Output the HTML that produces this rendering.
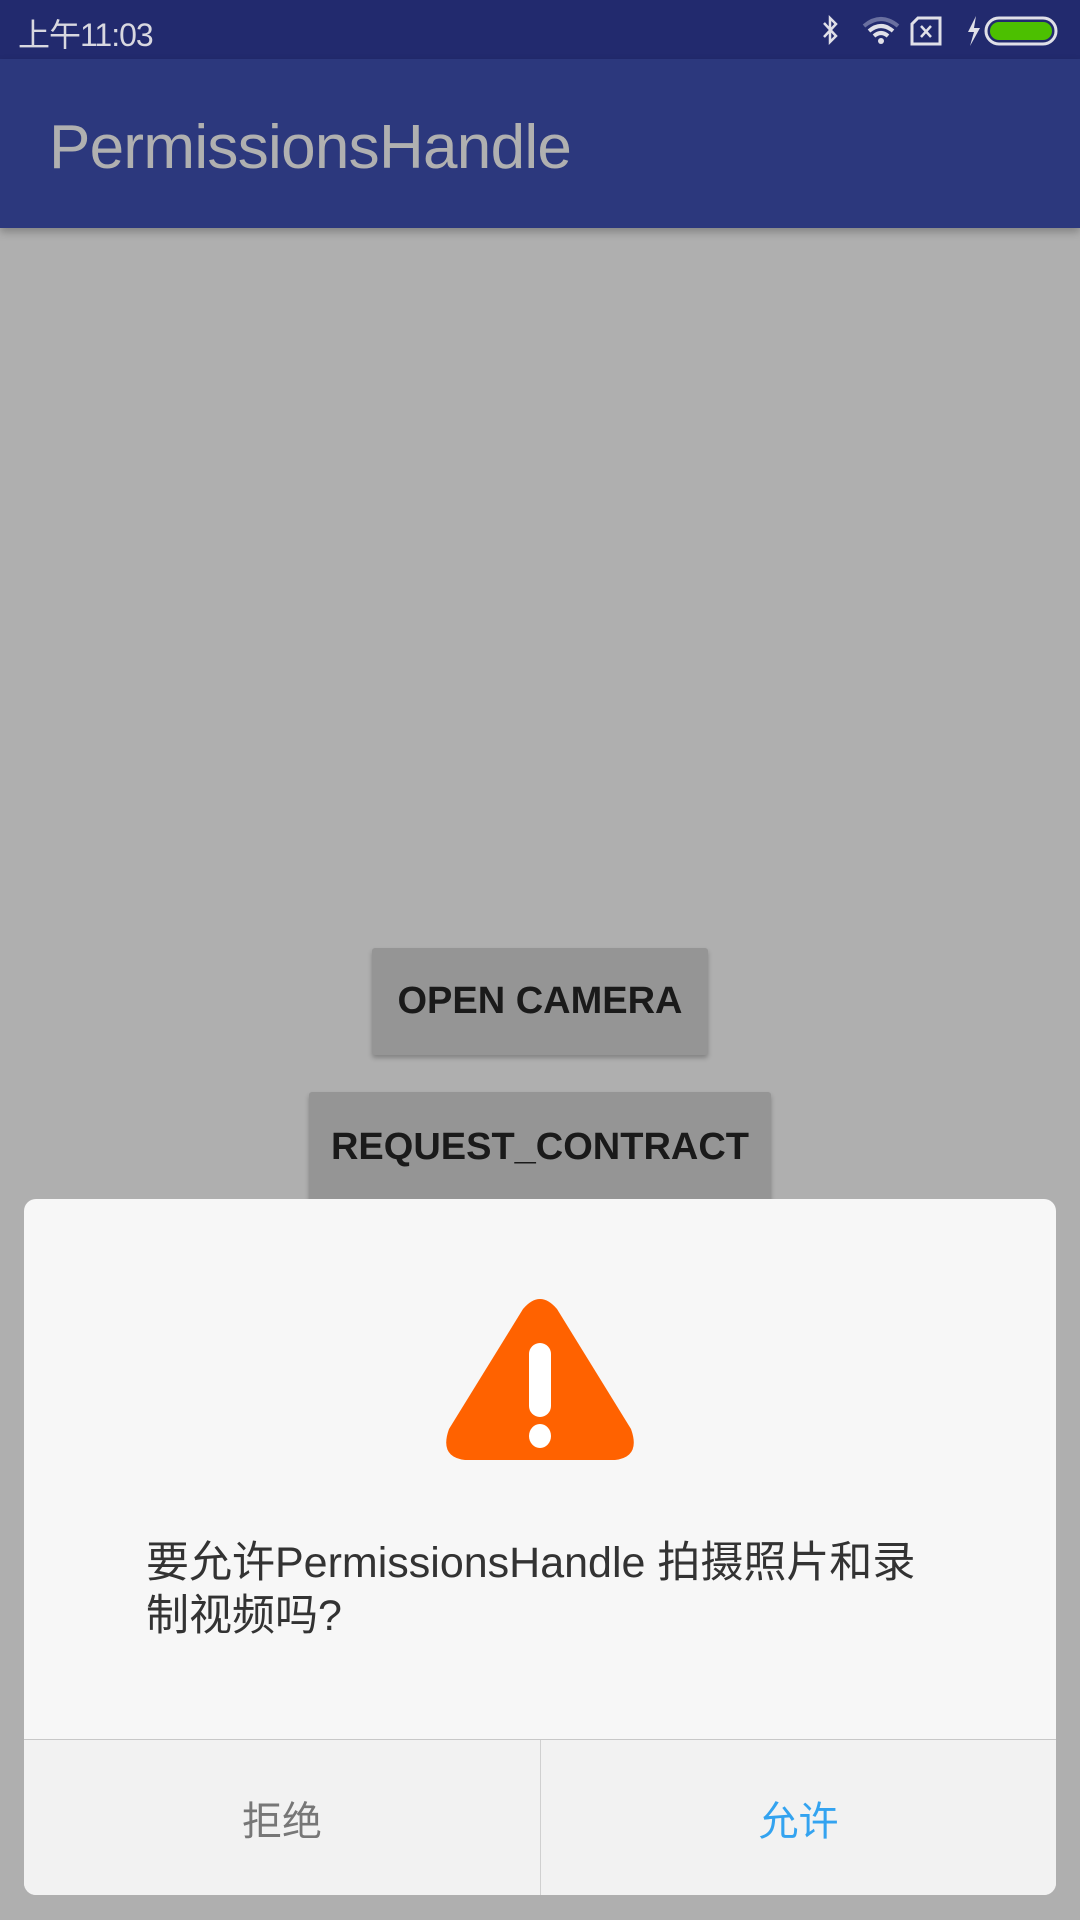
<!DOCTYPE html>
<html><head><meta charset="utf-8"><style>
*{margin:0;padding:0;box-sizing:border-box}
body{width:1080px;height:1920px;overflow:hidden;background:#afafaf;font-family:"Liberation Sans","Noto Sans CJK SC",sans-serif;position:relative}
.sb{position:absolute;left:0;top:0;width:1080px;height:59px;background:#222a6e}
.ab{position:absolute;left:0;top:59px;width:1080px;height:169px;background:#2c387d;box-shadow:0 4px 8px rgba(0,0,0,.25)}
.title{position:absolute;left:49px;top:53px;font-size:62px;color:#b0b0b0;letter-spacing:-0.7px}
.time{position:absolute;left:18px;top:10px;font-size:32px;color:#d8d8e0;letter-spacing:-1px}
.btn{position:absolute;background:#959595;color:#1a1a1a;font-size:38px;font-weight:bold;display:flex;align-items:center;justify-content:center;box-shadow:0 3px 5px rgba(0,0,0,.25);border-radius:3px}
.dlg{position:absolute;left:24px;top:1199px;width:1032px;height:696px;background:#f7f7f7;border-radius:12px;overflow:hidden}
.msg{position:absolute;left:122px;top:338px;width:850px;font-size:43px;line-height:53px;color:#333}
.bar{position:absolute;left:0;top:540px;width:1032px;height:156px;background:#f2f2f2;border-top:1.5px solid #c8c8c8}
.bar div{position:absolute;top:0;height:156px;width:516px;display:flex;align-items:center;justify-content:center;font-size:40px}
</style></head><body>
<div class="sb">
<div class="time">上午11:03</div>
<svg style="position:absolute;left:820px;top:14px" width="250" height="34" viewBox="0 0 250 34">
<path d="M4 9 L16 22 L10 28 L10 4 L16 10 L4 23" stroke="#e0e0e8" stroke-width="2.5" fill="none"/>
<path d="M44 12 Q61 -2 78 12" stroke="#6a70a0" stroke-width="4" fill="none"/>
<path d="M49 17 Q61 7 73 17" stroke="#e0e0e8" stroke-width="4" fill="none"/>
<path d="M54 22 Q61 16 68 22" stroke="#e0e0e8" stroke-width="4" fill="none"/>
<circle cx="61" cy="27" r="3" fill="#e0e0e8"/>
<path d="M98 4 L120 4 L120 30 L92 30 L92 10 Z" stroke="#e0e0e8" stroke-width="3" fill="none"/>
<path d="M101 12 L111 23 M111 12 L101 23" stroke="#e0e0e8" stroke-width="2.5"/>
<path d="M156 2 L148 18 L154 18 L150 32 L160 14 L154 14 Z" fill="#e0e0e8"/>
<rect x="166" y="4" width="70" height="26" rx="13" fill="none" stroke="#e0e0e8" stroke-width="3"/>
<rect x="170" y="8" width="62" height="18" rx="9" fill="#4cc000"/>
</svg>
</div>
<div class="ab"><div class="title">PermissionsHandle</div></div>
<div class="btn" style="left:372px;top:948px;width:336px;height:107px">OPEN CAMERA</div>
<div class="btn" style="left:309px;top:1092px;width:462px;height:110px">REQUEST_CONTRACT</div>
<div class="dlg">
<svg style="position:absolute;left:421px;top:98px" width="190" height="163" viewBox="0 0 190 163">
<path d="M78 12 Q95 -8 112 12 L186 132 Q196 160 170 163 L20 163 Q-6 160 4 132 Z" fill="#ff6200"/>
<rect x="84" y="46" width="22" height="74" rx="11" fill="#fff"/>
<ellipse cx="95" cy="139" rx="11" ry="12" fill="#fff"/>
</svg>
<div class="msg">要允许PermissionsHandle 拍摄照片和录<br>制视频吗?</div>
<div class="bar">
<div style="left:0;color:#777">拒绝</div>
<div style="left:516px;color:#33a3f0;border-left:1px solid #d0d0d0">允许</div>
</div>
</div>
</body></html>
